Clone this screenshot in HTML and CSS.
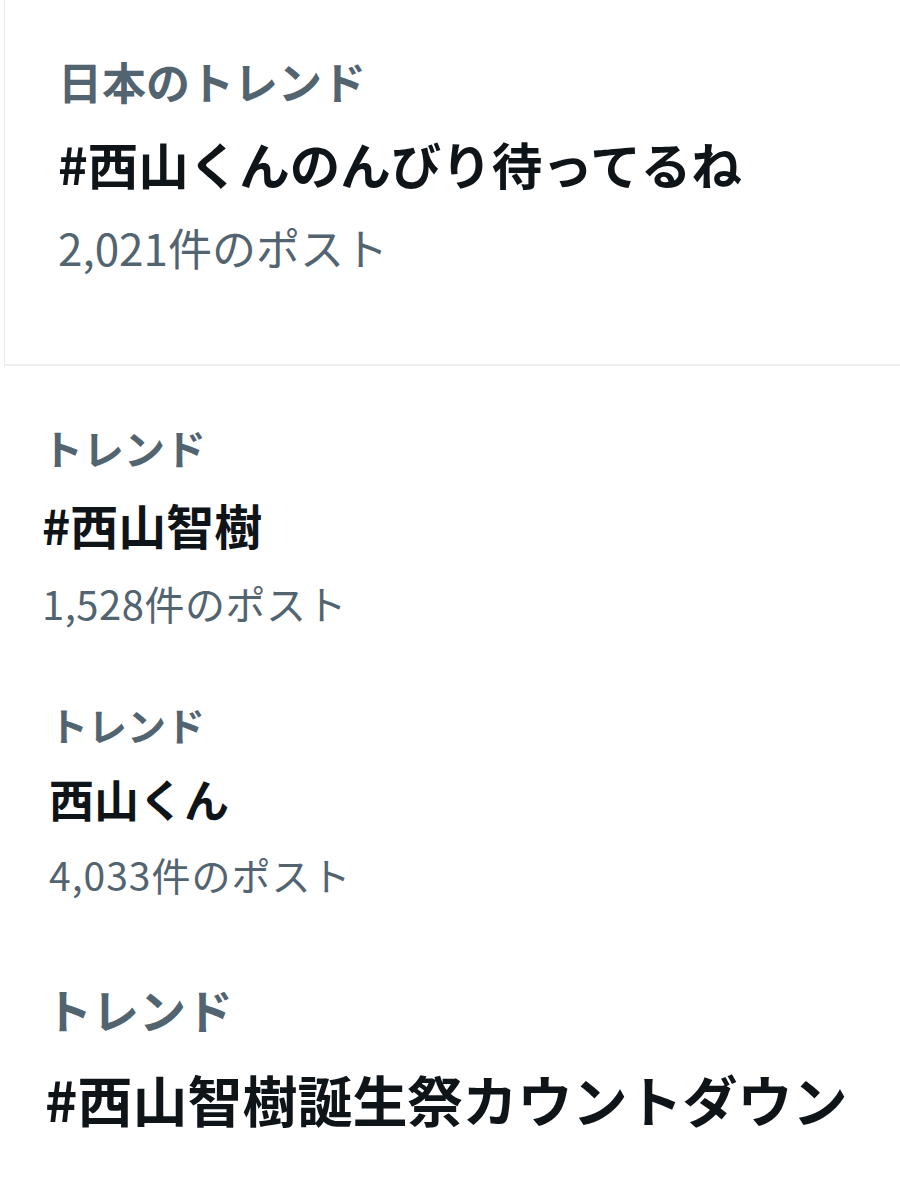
FILE: index.html
```html
<!DOCTYPE html>
<html lang="ja">
<head>
<meta charset="utf-8">
<title>トレンド</title>
<link rel="stylesheet" href="styles.css">
</head>
<body>
<main class="page">
  <section class="trend s1">
    <div class="label">日本のトレンド</div>
    <div class="title">#西山くんのんびり待ってるね</div>
    <div class="count">2,021件のポスト</div>
  </section>
  <section class="trend s2">
    <div class="label">トレンド</div>
    <div class="title">#西山智樹</div>
    <div class="count">1,528件のポスト</div>
  </section>
  <section class="trend s3">
    <div class="label">トレンド</div>
    <div class="title">西山くん</div>
    <div class="count">4,033件のポスト</div>
  </section>
  <section class="trend s4">
    <div class="label">トレンド</div>
    <div class="title">#西山智樹誕生祭カウントダウン</div>
  </section>
</main>
</body>
</html>
```

FILE: styles.css
```css
html, body {
  margin: 0;
  padding: 0;
  background: #ffffff;
}

body {
  width: 900px;
  height: 1200px;
  overflow: hidden;
  font-family: "Noto Sans CJK JP", "Noto Sans", sans-serif;
}

.page {
  display: flex;
  flex-direction: column;
}

.trend {
  display: flex;
  flex-direction: column;
  white-space: nowrap;
}

.label {
  color: #536471;
  font-weight: 700;
}

.title {
  color: #0f1419;
  font-weight: 700;
}

.count {
  color: #536471;
  font-weight: 400;
}

/* Section 1: bordered card */
.s1 {
  margin-left: 4px;
  border-left: 1px solid #e8e8e8;
  border-bottom: 2px solid #ededed;
  padding: 51px 0 87px 53px;
}
.s1 .label { font-size: 44px; line-height: 60px; }
.s1 .title { font-size: 50.5px; line-height: 70px; margin-top: 17px; }
.s1 .count { font-size: 44px; line-height: 60px; margin-top: 19px; }

/* Section 2 */
.s2 { padding: 55px 0 0 42px; }
.s2 .label { font-size: 41px; line-height: 52px; }
.s2 .title { font-size: 48px; line-height: 62px; margin-top: 20px; }
.s2 .count { font-size: 40px; line-height: 52px; margin-top: 22px; letter-spacing: 0.5px; }

/* Section 3 */
.s3 { padding: 70px 0 0 49px; }
.s3 .label { font-size: 39px; line-height: 50px; }
.s3 .title { font-size: 45px; line-height: 60px; margin-top: 20px; }
.s3 .count { font-size: 39px; line-height: 50px; margin-top: 20px; letter-spacing: 1px; }

/* Section 4 */
.s4 { padding: 78px 0 0 45px; }
.s4 .label { font-size: 47px; line-height: 64px; }
.s4 .title { font-size: 55px; line-height: 76px; margin-top: 19px; }
```
